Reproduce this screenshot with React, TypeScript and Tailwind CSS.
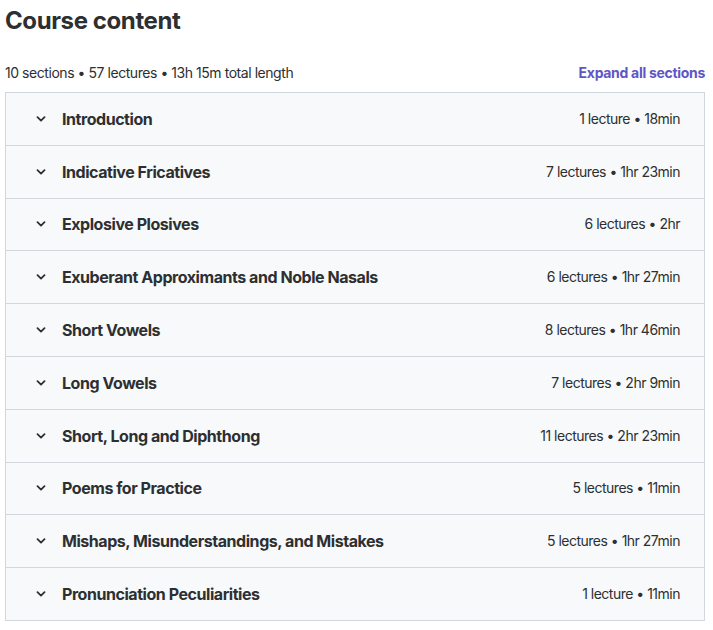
import React from "react";

const sections = [
  { title: "Introduction", meta: "1 lecture • 18min" },
  { title: "Indicative Fricatives", meta: "7 lectures • 1hr 23min" },
  { title: "Explosive Plosives", meta: "6 lectures • 2hr" },
  { title: "Exuberant Approximants and Noble Nasals", meta: "6 lectures • 1hr 27min" },
  { title: "Short Vowels", meta: "8 lectures • 1hr 46min" },
  { title: "Long Vowels", meta: "7 lectures • 2hr 9min" },
  { title: "Short, Long and Diphthong", meta: "11 lectures • 2hr 23min" },
  { title: "Poems for Practice", meta: "5 lectures • 11min" },
  { title: "Mishaps, Misunderstandings, and Mistakes", meta: "5 lectures • 1hr 27min" },
  { title: "Pronunciation Peculiarities", meta: "1 lecture • 11min" },
];

function Chevron() {
  return (
    <svg width="10" height="6" viewBox="0 0 10 6" fill="none" aria-hidden="true">
      <path d="M1.5 1.2 L5 4.6 L8.5 1.2" stroke="#2d2f31" strokeWidth="1.8" strokeLinecap="round" strokeLinejoin="round" />
    </svg>
  );
}

export default function App() {
  return (
    <div className="min-h-screen bg-white pl-[5px] text-[#2d2f31]" style={{ fontFamily: "Inter, 'Liberation Sans', sans-serif" }}>
      <div className="w-[700px]">
        <h2 className="pt-[6px] text-[24px] font-bold leading-[30px] tracking-[-0.4px]">Course content</h2>

        <div className="mt-[27px] flex items-end justify-between pb-[9px]">
          <span className="text-[14px] leading-[20px] tracking-[-0.45px]">
            10 sections • 57 lectures • 13h 15m total length
          </span>
          <button className="text-[14px] font-bold leading-[20px] tracking-[-0.3px] text-[#5f56c6]">
            Expand all sections
          </button>
        </div>

        <div className="border border-b-0 border-[#d1d7dc]">
          {sections.map((s) => (
            <div
              key={s.title}
              className="flex h-[52.8px] items-center justify-between border-b border-[#d1d7dc] bg-[#f7f9fa] pl-[30px] pr-[24px]"
            >
              <div className="flex items-center">
                <span className="flex w-[10px] justify-center">
                  <Chevron />
                </span>
                <span className="ml-[16px] text-[16px] font-bold leading-[20px] tracking-[-0.45px]">{s.title}</span>
              </div>
              <span className="text-[14px] leading-[20px] tracking-[-0.5px]">{s.meta}</span>
            </div>
          ))}
        </div>
      </div>
    </div>
  );
}
